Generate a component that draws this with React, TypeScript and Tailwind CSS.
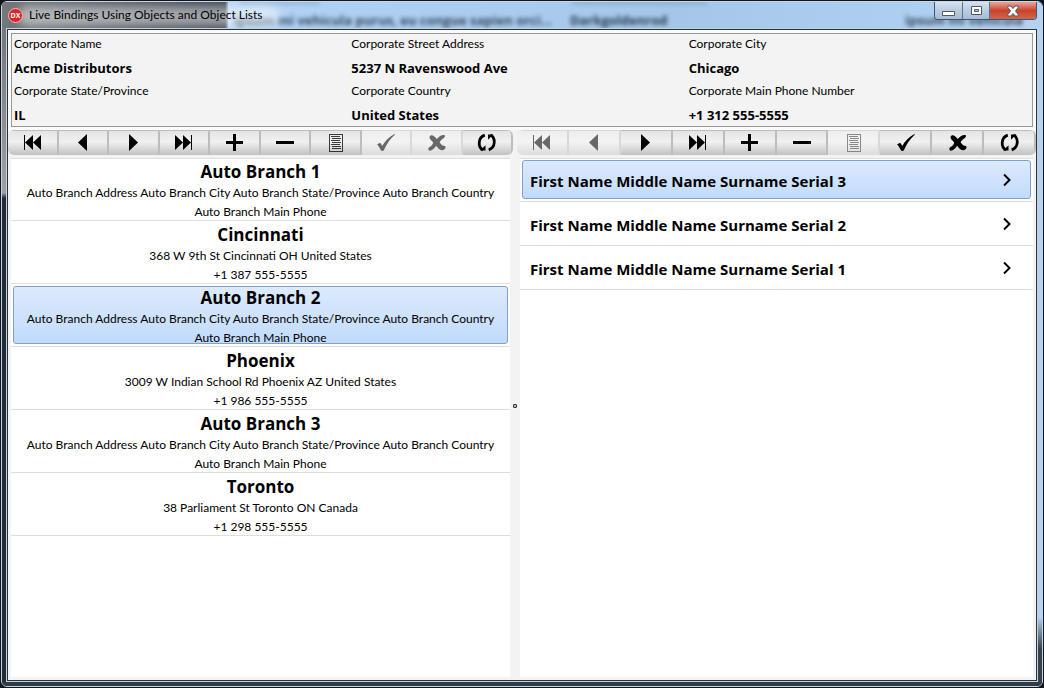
import { useState, type ReactNode } from "react";

type IconName = "first" | "prev" | "next" | "last" | "add" | "remove" | "edit" | "post" | "cancel" | "refresh";

const icons: Record<IconName, ReactNode> = {
  first: (
    <>
      <path d="M1 2h1v15H1z" />
      <path d="M10 2v15L2 9.500z" />
      <path d="M18 2v15l-8-7.500z" />
    </>
  ),
  prev: <path d="M14 1v17L5 9.500z" />,
  next: <path d="M5 1v17l9-8.500z" />,
  last: (
    <>
      <path d="M17 2h1v15h-1z" />
      <path d="M9 2v15l8-7.500z" />
      <path d="M1 2v15l8-7.500z" />
    </>
  ),
  add: <path d="M8 1h3v7h7v3h-7v7H8v-7H1V8h7z" />,
  remove: <path d="M1 8h18v3H1z" />,
  edit: (
    <g opacity="0.75">
      <path d="M3 1h14v18H3zM4 2v16h12V2z" fillRule="evenodd" />
      <path d="M5 3h9v1H5zM6 5h9v1H6zM5 7h9v1H5zM6 9h9v1H6zM5 11h9v1H5zM6 13h9v1H6zM6 15h9v1H6z" />
    </g>
  ),
  post: <path d="M1 11.500 4 9.800c1 .8 1.800 2 2.300 3.200C9 8 13.500 3.500 18.500 1c.4.200.3.700 0 1C14 6 10.500 11 8 17c-.6.900-2.300 1.300-3 .6C4.200 15.500 2.800 13.200 1 11.500z" />,
  cancel: <path d="M2.600 3.500C4 1.300 6.500 1.500 9.700 6 12 3.200 15 1.500 17.500 2c1 1 .3 2.500-1 3.200-2 1.200-3.200 2.500-3.900 4.100 1.300 2.200 3.200 3.800 5.400 3.700 1.400 1.500-.3 4.300-3 4.300-2.700-.3-4.500-2.300-5.700-4.500C7.500 15.300 5 18 2.500 17.700c-1.500-.7-1.700-2.700-.3-3.400C4 13.500 5.500 12 6.300 9.700 5 7.500 2.200 6.500 2.600 3.500z" />,
  refresh: (
    <>
      <path d="M7.800 2.200C.8 4.500.6 14 6 16.900" fill="none" stroke="currentColor" strokeWidth="2.800" />
      <path d="M3.200 17.500h5.300v-5.200z" />
      <path d="M11.700 16.800c7-2.300 7.200-11.800 1.800-14.700" fill="none" stroke="currentColor" strokeWidth="2.800" />
      <path d="M16.300 1.500H11v5.200z" />
    </>
  ),
};

const order: { name: IconName; label: string }[] = [
  { name: "first", label: "First" },
  { name: "prev", label: "Previous" },
  { name: "next", label: "Next" },
  { name: "last", label: "Last" },
  { name: "add", label: "Insert" },
  { name: "remove", label: "Delete" },
  { name: "edit", label: "Edit" },
  { name: "post", label: "Post" },
  { name: "cancel", label: "Cancel" },
  { name: "refresh", label: "Refresh" },
];

function Navigator({ label, disabled }: { label: string; disabled: IconName[] }) {
  return (
    <div role="toolbar" aria-label={label} className="flex h-[25px] overflow-hidden rounded-md border-r-2 border-[#bdbdbd]">
      {order.map(({ name, label: text }) => (
        <button
          key={name}
          type="button"
          aria-label={text}
          disabled={disabled.includes(name)}
          className="flex flex-1 items-center justify-center border-t border-r-2 border-[#bdbdbd] bg-linear-to-b from-[#e4e4e4] via-[#f1f1f1] via-45% to-[#c2c2c2] pl-px text-black last:border-r-0 disabled:border-[#d8d8d8] disabled:from-[#eeeeee] disabled:via-[#f3f3f3] disabled:to-[#dcdcdc] disabled:text-[#686868]"
        >
          <svg width="20" height="20" viewBox="0 0 20 20" fill="currentColor" aria-hidden="true">
            {icons[name]}
          </svg>
        </button>
      ))}
    </div>
  );
}

const company = [
  ["Corporate Name", "Acme Distributors"],
  ["Corporate Street Address", "5237 N Ravenswood Ave"],
  ["Corporate City", "Chicago"],
  ["Corporate State/Province", "IL"],
  ["Corporate Country", "United States"],
  ["Corporate Main Phone Number", "+1 312 555-5555"],
];

const autoAddress = "Auto Branch Address Auto Branch City Auto Branch State/Province Auto Branch Country";

const branches = [
  { name: "Auto Branch 1", address: autoAddress, phone: "Auto Branch Main Phone" },
  { name: "Cincinnati", address: "368 W 9th St Cincinnati OH United States", phone: "+1 387 555-5555" },
  { name: "Auto Branch 2", address: autoAddress, phone: "Auto Branch Main Phone" },
  { name: "Phoenix", address: "3009 W Indian School Rd Phoenix AZ United States", phone: "+1 986 555-5555" },
  { name: "Auto Branch 3", address: autoAddress, phone: "Auto Branch Main Phone" },
  { name: "Toronto", address: "38 Parliament St Toronto ON Canada", phone: "+1 298 555-5555" },
];

const people = [
  "First Name Middle Name Surname Serial 3",
  "First Name Middle Name Surname Serial 2",
  "First Name Middle Name Surname Serial 1",
];

const selectedRow = "border-[#7da2ce] bg-linear-to-b from-[#dceafc] to-[#c1dbfc]";
const behindGlass = "absolute top-[11px] h-[15px] text-[13px] leading-[15px] font-bold whitespace-nowrap text-[#26384c] blur-[2px]";

function TitleBar() {
  return (
    <header className="relative flex h-[26px] justify-between overflow-hidden bg-linear-to-r from-[#74777b] from-0% via-[#3c444f] via-[223px] to-[#adcff2] to-[227px]">
      <div aria-hidden="true" className="absolute inset-0 left-[226px] bg-linear-to-r from-[#b3d3f5] via-[#a4c7e9] via-55% to-[#b4d3f4]" />
      <div aria-hidden="true" className="absolute top-0 left-[238px] h-0.5 w-20 bg-[#26384c]/30 blur-[2px]" />
      <div aria-hidden="true" className="absolute top-0 left-[570px] h-0.5 w-[135px] bg-[#26384c]/30 blur-[2px]" />
      <div aria-hidden="true" className={`left-[232px] opacity-90 ${behindGlass}`}>
        ipsum mi vehicula purus, eu congue sapien orci…
      </div>
      <div aria-hidden="true" className={`left-[568px] ${behindGlass}`}>
        Darkgoldenrod
      </div>
      <div aria-hidden="true" className={`left-[903px] opacity-90 ${behindGlass}`}>
        ipsum mi vehicula
      </div>
      <div aria-hidden="true" className="absolute top-1 left-4 h-5 w-[262px] rounded-full bg-white/50 blur-[5px]" />
      <div className="relative flex items-center gap-1.5 pl-1.5">
        <svg width="15" height="15" viewBox="0 0 15 15" aria-hidden="true">
          <circle cx="7.500" cy="7.500" r="7" fill="#d9242b" stroke="#f1b5b5" />
          <text x="7.500" y="10" textAnchor="middle" fontSize="7" fontWeight="700" fill="#fff">DX</text>
        </svg>
        <h1 className="font-['Lato','Open_Sans',sans-serif] text-xs text-black">Live Bindings Using Objects and Object Lists</h1>
      </div>
      <div className="relative mr-[5px] flex h-[18px] overflow-hidden rounded-b-[4px] border border-t-0 border-[#46566a]">
        <button type="button" aria-label="Minimize" className="flex w-7 items-center justify-center border-r border-[#5d7188] bg-linear-to-b from-[#d5e3f2] via-[#bccde0] via-45% to-[#a4bdd8]">
          <svg width="13" height="13" viewBox="0 0 13 13" aria-hidden="true">
            <path d="M.5 7.500h12v4H.5z" fill="#fff" stroke="#535666" />
          </svg>
        </button>
        <button type="button" aria-label="Maximize" className="flex w-[27px] items-center justify-center border-r border-[#5d7188] bg-linear-to-b from-[#d5e3f2] via-[#bccde0] via-45% to-[#a4bdd8]">
          <svg width="13" height="13" viewBox="0 0 13 13" aria-hidden="true">
            <path d="M1.500 2.500h10v8h-10zM4.500 5.500v2h4v-2z" fillRule="evenodd" fill="#fff" stroke="#535666" />
          </svg>
        </button>
        <button type="button" aria-label="Close" className="flex w-[46px] items-center justify-center bg-linear-to-b from-[#e5a698] via-[#c8432d] via-50% to-[#d1664c]">
          <svg width="14" height="12" viewBox="0 0 14 12" aria-hidden="true">
            <path d="M2 1h3l2 2.500L9 1h3l.5 1L9.500 6l3 4-.5 1H9L7 8.500 5 11H2l-.5-1 3-4-3-4z" fill="#fff" stroke="#535666" />
          </svg>
        </button>
      </div>
    </header>
  );
}

export default function App() {
  const [branch, setBranch] = useState(2);
  const [person, setPerson] = useState(0);

  return (
    <div className="flex min-h-screen bg-[#10151c] p-px font-['Open_Sans','Noto_Sans',sans-serif] text-black">
      <div className="flex min-w-0 flex-1 flex-col overflow-hidden rounded-md border border-[#c9d6e4]">
        <TitleBar />
        <div className="flex flex-1">
          <div className="w-1 bg-linear-to-b from-[#74777b] from-0% via-[#a49ea4] via-[165px] to-[#242d37] to-[170px]" />
          <div className="flex min-w-0 flex-1 border border-[#c3d2df]">
            <main className="flex min-w-0 flex-1 flex-col border border-[#2b3238] bg-[#f3f3f3] pb-[3px]">
              <dl className="m-[3px] grid h-[94px] grid-cols-3 border border-[#999999] pr-1.5 pl-0.5 shadow-[0_0_0_3px_#f9fbfa]">
                {company.map(([label, value]) => (
                  <div key={label}>
                    <dt className="h-5 font-['Lato','Open_Sans',sans-serif] text-xs leading-5">{label}</dt>
                    <dd className="h-[27px] text-[13px] leading-7 font-bold">{value}</dd>
                  </div>
                ))}
              </dl>
              <div className="grid flex-1 grid-cols-[505fr_519fr] gap-1">
                <section className="flex min-w-0 flex-col">
                  <Navigator label="Branch navigator" disabled={["post", "cancel"]} />
                  <ul className="mx-[3px] mt-[3px] flex-1 border-t border-[#dedede] bg-white">
                    {branches.map((item, index) => (
                      <li key={item.name} className="h-[63px] border-b border-[#dedede] px-0.5 pt-0.5 first:h-[62px] first:pt-px">
                        <button
                          type="button"
                          aria-pressed={branch === index}
                          onClick={() => setBranch(index)}
                          className={`flex h-[58px] w-full flex-col items-center overflow-hidden rounded-[3px] border font-['Lato','Open_Sans',sans-serif] text-xs leading-[19px] whitespace-nowrap ${branch === index ? selectedRow : "border-transparent"}`}
                        >
                          <span className="font-['Open_Sans','Noto_Sans',sans-serif] text-[17px] leading-[22px] font-bold">{item.name}</span>
                          <span>{item.address}</span>
                          <span>{item.phone}</span>
                        </button>
                      </li>
                    ))}
                  </ul>
                </section>
                <section className="relative flex min-w-0 flex-col">
                  <Navigator label="Employee navigator" disabled={["first", "prev", "edit"]} />
                  <span aria-hidden="true" className="absolute top-1/2 -left-1 size-1 rounded-[1px] border border-[#333333] bg-[#bbbbbb]" />
                  <ul className="mx-[3px] mt-[3px] flex-1 border-t border-[#dedede] bg-white">
                    {people.map((name, index) => (
                      <li key={name} className="h-11 border-b border-[#dedede] px-0.5 pt-0.5 first:h-[43px] first:pt-px">
                        <button
                          type="button"
                          aria-pressed={person === index}
                          onClick={() => setPerson(index)}
                          className={`flex h-[39px] w-full items-center justify-between rounded-[3px] border pr-[17px] pl-[7px] text-left text-[15px] leading-5 font-bold whitespace-nowrap ${person === index ? selectedRow : "border-transparent"}`}
                        >
                          <span className="pt-0.5">{name}</span>
                          <svg width="12" height="15" viewBox="0 0 12 15" fill="none" stroke="currentColor" strokeWidth="2" aria-hidden="true">
                            <path d="m3 2.500 5.500 5.500L3 13.500" />
                          </svg>
                        </button>
                      </li>
                    ))}
                  </ul>
                </section>
              </div>
            </main>
          </div>
          <div className="w-1 bg-linear-to-b from-[#b4d3f4] from-90% to-[#36424e] to-95%" />
        </div>
        <div className="h-1 bg-[#303c47]" />
      </div>
    </div>
  );
}
